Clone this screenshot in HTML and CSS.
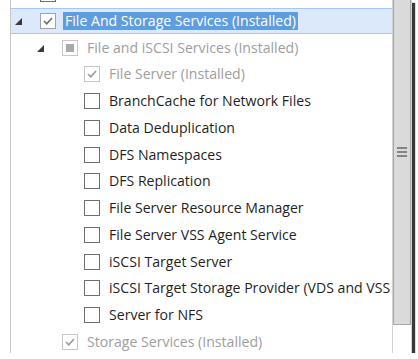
FILE: index.html
```html
<!DOCTYPE html>
<html>
<head>
<meta charset="utf-8">
<link rel="stylesheet" href="styles.css">
</head>
<body>
<div class="shot">
  <div class="pane">
    <ul class="tree">
      <li class="row l0"><span class="exp"></span><span class="cb"></span></li>
      <li class="row l0 selected"><span class="exp"><svg width="7" height="7" viewBox="0 0 7 7"><polygon points="7,0 7,7 0,7"/></svg></span><span class="cb soft"><svg width="14" height="14" viewBox="0 0 14 14"><polyline points="3,7 5.8,9.9 11,4"/></svg></span><span class="label">File And Storage Services (Installed)</span></li>
      <li class="row l1 disabled"><span class="exp"><svg width="7" height="7" viewBox="0 0 7 7"><polygon points="7,0 7,7 0,7"/></svg></span><span class="cb"><span class="ind"></span></span><span class="label">File and iSCSI Services (Installed)</span></li>
      <li class="row l2 disabled"><span class="exp"></span><span class="cb"><svg width="14" height="14" viewBox="0 0 14 14"><polyline points="3,7 5.8,9.9 11,4"/></svg></span><span class="label">File Server (Installed)</span></li>
      <li class="row l2"><span class="exp"></span><span class="cb"></span><span class="label">BranchCache for Network Files</span></li>
      <li class="row l2"><span class="exp"></span><span class="cb"></span><span class="label">Data Deduplication</span></li>
      <li class="row l2"><span class="exp"></span><span class="cb"></span><span class="label">DFS Namespaces</span></li>
      <li class="row l2"><span class="exp"></span><span class="cb"></span><span class="label">DFS Replication</span></li>
      <li class="row l2"><span class="exp"></span><span class="cb"></span><span class="label">File Server Resource Manager</span></li>
      <li class="row l2"><span class="exp"></span><span class="cb"></span><span class="label">File Server VSS Agent Service</span></li>
      <li class="row l2"><span class="exp"></span><span class="cb"></span><span class="label">iSCSI Target Server</span></li>
      <li class="row l2"><span class="exp"></span><span class="cb"></span><span class="label">iSCSI Target Storage Provider (VDS and VSS</span></li>
      <li class="row l2"><span class="exp"></span><span class="cb"></span><span class="label">Server for NFS</span></li>
      <li class="row l1 disabled"><span class="exp"></span><span class="cb"><svg width="14" height="14" viewBox="0 0 14 14"><polyline points="3,7 5.8,9.9 11,4"/></svg></span><span class="label">Storage Services (Installed)</span></li>
    </ul>
    <div class="sb">
      <div class="thumb"><div class="grip"><i></i><i></i><i></i></div></div>
    </div>
  </div>
</div>
</body>
</html>
```

FILE: styles.css
```css
* { box-sizing: border-box; margin: 0; padding: 0; }
html, body { background: #fff; overflow: hidden; }
body {
  font-family: "Open Sans", "Noto Sans", sans-serif;
  font-size: 14.1px;
  color: #1f1f1f;
}
.shot {
  width: 412px;
  height: 353px;
  background: #fff;
  box-shadow: 3px 3px 1px rgba(0, 0, 0, 0.78);
  overflow: hidden;
}
.pane {
  display: flex;
  height: 100%;
  margin-left: 10px;
  border-left: 1px solid #c6c6c6;
}
.tree {
  flex: 1;
  min-width: 0;
  list-style: none;
  margin-top: -19.25px;
  overflow: hidden;
}
.row {
  display: flex;
  align-items: center;
  height: 26.75px;
  white-space: nowrap;
  padding-left: 4px;
}
.row.l1 { padding-left: 26px; }
.row.l2 { padding-left: 48px; }
.row.selected {
  margin-left: -1px;
  border-left: 1px solid #a4c8ef;
  border-top: 1px solid #a4c8ef;
  border-bottom: 1px solid #a4c8ef;
  background: #dbe9fb;
}
.exp {
  width: 25px;
  flex: none;
  display: flex;
  align-items: center;
  padding-top: 1px;
}
.exp svg { fill: #3a3a3a; }
.cb {
  width: 16px;
  height: 16px;
  flex: none;
  border: 1px solid #6e6e6e;
  background: #fff;
  display: flex;
  align-items: center;
  justify-content: center;
}
.cb svg { fill: none; stroke: #6f6f6f; stroke-width: 1.6; }
.cb.soft { border-color: #a3a3a3; }
.disabled .cb { border-color: #c6c6c6; }
.disabled .cb svg { stroke: #9a9a9a; }
.ind { width: 8px; height: 8px; background: #a9a9a9; }
.label {
  margin-left: 7px;
  padding: 0 2px;
  line-height: 18px;
}
.disabled .label { color: #9e9e9e; }
.selected .label { background: #5e9ddf; color: #fff; }
.sb {
  width: 20px;
  flex: none;
  border-left: 1px solid #d2d2d2;
  border-right: 1px solid #d2d2d2;
  display: flex;
  flex-direction: column;
}
.thumb {
  margin-top: -21px;
  height: 346px;
  background: #dadada;
  border: 1px solid #a8a8a8;
  display: flex;
  align-items: center;
  justify-content: center;
}
.grip {
  display: flex;
  flex-direction: column;
  gap: 2px;
  width: 10px;
}
.grip i { display: block; height: 2px; background: #858585; }
```
